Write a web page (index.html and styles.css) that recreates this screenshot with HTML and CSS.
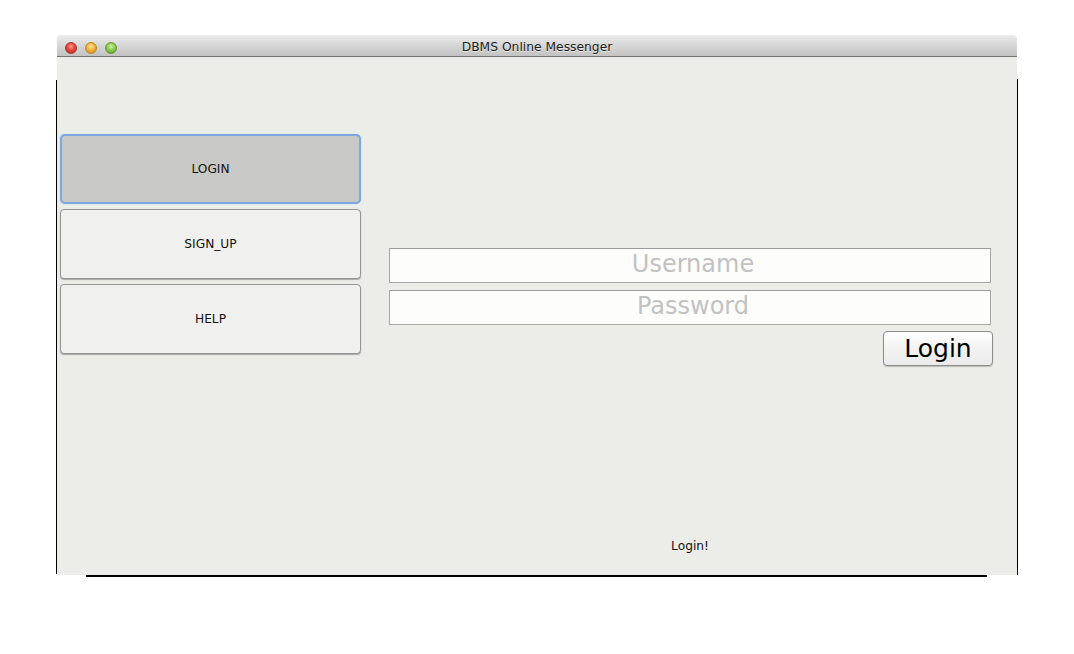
FILE: index.html
```html
<!DOCTYPE html>
<html>
<head>
<meta charset="utf-8">
<title>DBMS Online Messenger</title>
<link rel="stylesheet" href="styles.css">
</head>
<body>
<div class="window">
  <div class="titlebar">
    <div class="lights">
      <span class="light red"></span>
      <span class="light yellow"></span>
      <span class="light green"></span>
    </div>
    <div class="title">DBMS Online Messenger</div>
    <div></div>
  </div>
  <div class="content">
    <div class="side">
      <button class="navbtn active">LOGIN</button>
      <button class="navbtn">SIGN_UP</button>
      <button class="navbtn">HELP</button>
    </div>
    <div class="main">
      <input class="field" type="text" placeholder="Username">
      <input class="field" type="password" placeholder="Password">
      <button class="loginbtn">Login</button>
      <div class="status">Login!</div>
    </div>
  </div>
  <div class="edge-bottom"></div>
</div>
</body>
</html>
```

FILE: styles.css
```css
html, body {
  margin: 0;
  padding: 0;
  background: #ffffff;
  font-family: "DejaVu Sans", "Liberation Sans", sans-serif;
}

.window {
  position: relative;
  width: 960px;
  margin: 35px 0 0 57px;
}

.window::before,
.window::after {
  content: "";
  position: absolute;
  width: 1px;
  background: #000;
}

.window::before {
  left: -1px;
  top: 45px;
  height: 494px;
}

.window::after {
  left: 960px;
  top: 44px;
  height: 496px;
}

.edge-bottom {
  width: 901px;
  height: 2px;
  margin-left: 29px;
  background: #000;
}

.titlebar {
  height: 21px;
  border-bottom: 1px solid #737373;
  background: linear-gradient(#ececec, #d6d6d6 50%, #c2c2c2);
  border-radius: 4px 4px 0 0;
  display: grid;
  grid-template-columns: 1fr auto 1fr;
  align-items: center;
}

.lights {
  display: flex;
  gap: 8px;
  padding: 2px 0 0 8px;
}

.light {
  width: 12px;
  height: 12px;
  border-radius: 50%;
  box-sizing: border-box;
}

.red {
  background: radial-gradient(circle at 50% 35%, #ff9a94 0, #e8443c 45%, #b3221c 100%);
  border: 1px solid #a8392f;
}

.yellow {
  background: radial-gradient(circle at 50% 35%, #ffe3a0 0, #f2b53a 45%, #c98718 100%);
  border: 1px solid #b88a2c;
}

.green {
  background: radial-gradient(circle at 50% 35%, #cdf4a8 0, #8ccb4f 45%, #4f9a25 100%);
  border: 1px solid #6a9a3c;
}

.title {
  font-size: 12.3px;
  color: #1e1e1e;
  line-height: 21px;
  padding-top: 2px;
  text-shadow: 0 1px 0 rgba(255, 255, 255, 0.5);
}

.content {
  height: 518px;
  background: #ecede9;
  display: flex;
}

.side {
  width: 301px;
  padding: 77px 0 0 3px;
  display: flex;
  flex-direction: column;
  gap: 5px;
}

.navbtn {
  height: 70px;
  box-sizing: border-box;
  border: 1px solid #959595;
  border-radius: 4px;
  background: #f0f1ee;
  box-shadow: 0 1px 1px rgba(0, 0, 0, 0.3);
  font-family: "DejaVu Sans", "Liberation Sans", sans-serif;
  font-size: 12.2px;
  color: #111;
  padding: 0;
}

.navbtn.active {
  background: #c8c9c6;
  border: 2px solid #7ea7e2;
  border-radius: 5px;
  box-shadow: 0 0 1px #9bbcf0;
}

.main {
  width: 604px;
  margin-left: 28px;
  padding-top: 191px;
  display: flex;
  flex-direction: column;
}

.field {
  width: 602px;
  height: 35px;
  box-sizing: border-box;
  border: 1px solid #a6a6a6;
  border-top-color: #9a9a9a;
  background: #fdfdfb;
  font-family: "DejaVu Sans", "Liberation Sans", sans-serif;
  font-size: 24px;
  text-align: center;
  padding: 0 0 3px 6px;
  margin: 0 0 7px 0;
  outline: none;
}

.field::placeholder {
  color: #c2c2c2;
  opacity: 1;
}

.loginbtn {
  align-self: flex-end;
  width: 110px;
  height: 35px;
  margin-top: -1px;
  box-sizing: border-box;
  border: 1px solid #8c8c8c;
  border-radius: 4px;
  background: linear-gradient(#ffffff, #f2f2f2 50%, #ebebeb);
  box-shadow: 0 1px 1px rgba(0, 0, 0, 0.2);
  font-family: "DejaVu Sans", "Liberation Sans", sans-serif;
  font-size: 25px;
  color: #000;
  padding: 0;
}

.status {
  margin-top: auto;
  width: 602px;
  text-align: center;
  font-size: 12.2px;
  color: #111;
  padding-bottom: 22px;
}
```
